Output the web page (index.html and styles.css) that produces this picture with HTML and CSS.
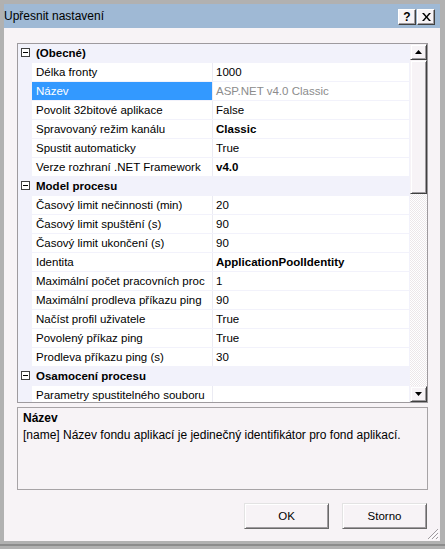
FILE: index.html
```html
<!DOCTYPE html>
<html lang="cs">
<head>
  <meta charset="UTF-8" />
  <title>Upřesnit nastavení</title>
  <link rel="stylesheet" href="styles.css">
</head>
<body>
  <div class="window">
    <div class="titlebar">
      <span class="title">Upřesnit nastavení</span>
      <div class="caption-buttons">
        <span class="cap-btn help">?</span>
        <span class="cap-btn close">
          <svg width="9" height="8" viewBox="0 0 9 8"><path d="M0 0h2l2.5 3 2.5-3h2l-3.5 4 3.5 4h-2l-2.5-3-2.5 3h-2l3.5-4z" fill="#000"/></svg>
        </span>
      </div>
    </div>

    <div class="client">
      <div class="grid">
        <div class="rows">
          <div class="row cat"><span class="margin"><i class="toggle"></i></span><span class="cat-name">(Obecné)</span></div>
          <div class="row"><span class="margin"></span><span class="name">Délka fronty</span><span class="value">1000</span></div>
          <div class="row"><span class="margin"></span><span class="name selected">Název</span><span class="value readonly">ASP.NET v4.0 Classic</span></div>
          <div class="row"><span class="margin"></span><span class="name">Povolit 32bitové aplikace</span><span class="value">False</span></div>
          <div class="row"><span class="margin"></span><span class="name">Spravovaný režim kanálu</span><span class="value bold">Classic</span></div>
          <div class="row"><span class="margin"></span><span class="name">Spustit automaticky</span><span class="value">True</span></div>
          <div class="row"><span class="margin"></span><span class="name">Verze rozhraní .NET Framework</span><span class="value bold">v4.0</span></div>
          <div class="row cat"><span class="margin"><i class="toggle"></i></span><span class="cat-name">Model procesu</span></div>
          <div class="row"><span class="margin"></span><span class="name">Časový limit nečinnosti (min)</span><span class="value">20</span></div>
          <div class="row"><span class="margin"></span><span class="name">Časový limit spuštění (s)</span><span class="value">90</span></div>
          <div class="row"><span class="margin"></span><span class="name">Časový limit ukončení (s)</span><span class="value">90</span></div>
          <div class="row"><span class="margin"></span><span class="name">Identita</span><span class="value bold">ApplicationPoolIdentity</span></div>
          <div class="row"><span class="margin"></span><span class="name">Maximální počet pracovních proc</span><span class="value">1</span></div>
          <div class="row"><span class="margin"></span><span class="name">Maximální prodleva příkazu ping</span><span class="value">90</span></div>
          <div class="row"><span class="margin"></span><span class="name">Načíst profil uživatele</span><span class="value">True</span></div>
          <div class="row"><span class="margin"></span><span class="name">Povolený příkaz ping</span><span class="value">True</span></div>
          <div class="row"><span class="margin"></span><span class="name">Prodleva příkazu ping (s)</span><span class="value">30</span></div>
          <div class="row cat"><span class="margin"><i class="toggle"></i></span><span class="cat-name">Osamocení procesu</span></div>
          <div class="row"><span class="margin"></span><span class="name">Parametry spustitelného souboru</span><span class="value"></span></div>
        </div>
        <div class="scrollbar">
          <div class="sb-btn"><svg width="7" height="4" viewBox="0 0 7 4"><path d="M3.5 0L7 4H0z" fill="#000"/></svg></div>
          <div class="sb-thumb"></div>
          <div class="sb-track"></div>
          <div class="sb-btn"><svg width="7" height="4" viewBox="0 0 7 4"><path d="M0 0h7L3.5 4z" fill="#000"/></svg></div>
        </div>
      </div>

      <div class="desc">
        <div class="desc-title">Název</div>
        <div class="desc-text">[name] Název fondu aplikací je jedinečný identifikátor pro fond aplikací.</div>
      </div>

      <div class="actions">
        <button class="btn">OK</button>
        <button class="btn">Storno</button>
      </div>

      <svg class="grip" width="12" height="12" viewBox="0 0 12 12">
        <path d="M11 1L1 11M11 5L5 11M11 9L9 11" stroke="#a09ca0" stroke-width="1"/>
        <path d="M12 2L2 12M12 6L6 12M12 10L10 12" stroke="#fff" stroke-width="1"/>
      </svg>
    </div>
  </div>
</body>
</html>
```

FILE: styles.css
```css
body {
  margin: 0;
  font-family: 'Liberation Sans', Arial, sans-serif;
  font-size: 11.5px;
  color: #000;
}
.window {
  width: 445px;
  height: 549px;
  box-sizing: border-box;
  background: #b1b1b1;
  padding: 4px 5px 8px 4px;
  display: flex;
  flex-direction: column;
  box-shadow: inset 0 -3px 0 #b1b1b1, inset 0 -5px 0 #8c8c8c;
}
.titlebar {
  height: 24px;
  background: #9fb9d5;
  display: flex;
  align-items: center;
  justify-content: space-between;
  padding: 0 5px 0 0;
}
.title {
  font-size: 12px;
  line-height: 24px;
}
.caption-buttons {
  display: flex;
  gap: 1px;
  margin-top: 1px;
}
.cap-btn {
  width: 16px;
  height: 14px;
  background: #f7f3f6;
  border: 1px solid;
  border-color: #fff #404040 #404040 #fff;
  box-shadow: inset -1px -1px #a09ca0;
  display: flex;
  align-items: center;
  justify-content: center;
  font-weight: bold;
  font-size: 12px;
}
.client {
  position: relative;
  flex: 1;
  background: #f7f3f6;
  padding: 15px 12px 0 13px;
}
.grid {
  width: 411px;
  height: 360px;
  box-sizing: border-box;
  border: 1px solid #9e9a9e;
  display: flex;
  overflow: hidden;
}
.rows {
  flex: 1;
  overflow: hidden;
  background: #f2f2fb;
}
.row {
  display: flex;
  height: 18px;
  line-height: 18px;
  border-bottom: 1px solid #f2f2fb;
  white-space: nowrap;
}
.margin {
  width: 14px;
  flex: none;
  background: #f2f2fb;
  position: relative;
}
.toggle {
  position: absolute;
  left: 3px;
  top: 4px;
  width: 7px;
  height: 7px;
  border: 1px solid #404040;
  background: #fff;
}
.toggle::after {
  content: '';
  position: absolute;
  left: 1px;
  top: 3px;
  width: 5px;
  height: 1px;
  background: #000;
}
.cat-name {
  padding-left: 4px;
  font-weight: bold;
}
.name {
  width: 181px;
  flex: none;
  box-sizing: border-box;
  padding-left: 4px;
  background: #fff;
  border-right: 1px solid #ebebf3;
  overflow: hidden;
}
.name.selected {
  background: #3399ff;
  color: #fff;
}
.value {
  flex: 1;
  padding-left: 3px;
  background: #fff;
}
.value.bold {
  font-weight: bold;
}
.value.readonly {
  color: #8c8c8c;
}
.scrollbar {
  width: 17px;
  flex: none;
  display: flex;
  flex-direction: column;
  border-left: 1px solid #f2f2fb;
}
.sb-btn,
.sb-thumb {
  box-sizing: border-box;
  background: #f7f3f6;
  border: 1px solid;
  border-color: #f7f3f6 #404040 #404040 #f7f3f6;
  box-shadow: inset 1px 1px #fff, inset -1px -1px #a09ca0;
}
.sb-btn {
  height: 16px;
  display: flex;
  align-items: center;
  justify-content: center;
}
.sb-thumb {
  height: 134px;
}
.sb-track {
  flex: 1;
  background: repeating-conic-gradient(#fff 0 25%, #ece7ea 0 50%) 0 0 / 2px 2px;
}
.desc {
  margin-top: 4px;
  width: 411px;
  height: 83px;
  box-sizing: border-box;
  border: 1px solid #a7a3a6;
  padding: 3px 5px;
}
.desc-title {
  font-weight: bold;
  font-size: 12px;
  line-height: 14px;
}
.desc-text {
  margin-top: 3px;
  font-size: 12px;
  line-height: 14px;
}
.actions {
  display: flex;
  justify-content: flex-end;
  gap: 13px;
  margin-top: 13px;
  width: 410px;
}
.btn {
  width: 85px;
  height: 26px;
  font-family: inherit;
  font-size: 11.5px;
  background: #f7f3f6;
  border: 1px solid;
  border-color: #e3e3e3 #696969 #696969 #e3e3e3;
  box-shadow: inset 1px 1px #fff, inset -1px -1px #a09ca0;
  padding: 0;
}
.grip {
  position: absolute;
  right: 1px;
  bottom: 1px;
}
```
